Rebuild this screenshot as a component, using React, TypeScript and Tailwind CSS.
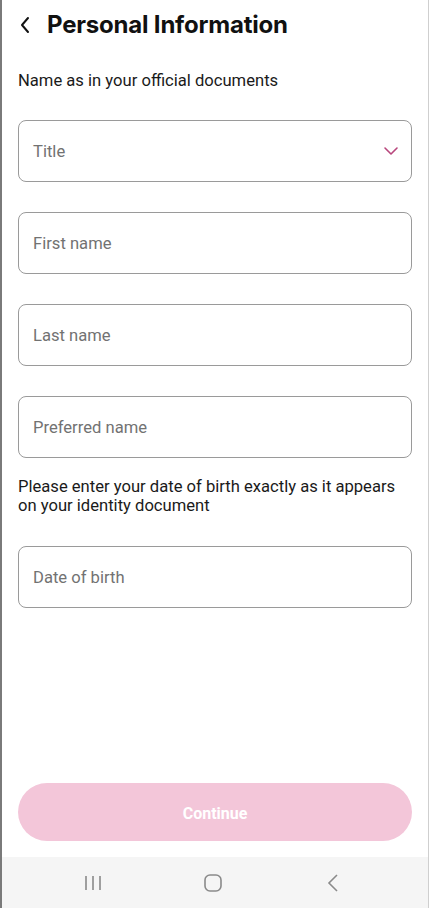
import React from "react";

function Field({ label, chevron }: { label: string; chevron?: boolean }) {
  return (
    <div className="flex h-[62px] items-center justify-between rounded-[8px] border border-[#9a9a9a] bg-white pl-[14px] pr-[12px]">
      <span className="pt-[2px] text-[16.6px] text-[#727272]">{label}</span>
      {chevron && (
        <svg width="16" height="10" viewBox="0 0 16 10" fill="none">
          <path d="M2 2l6 6 6-6" stroke="#b8467c" strokeWidth="1.6" strokeLinecap="round" strokeLinejoin="round" />
        </svg>
      )}
    </div>
  );
}

export default function App() {
  return (
    <div
      className="flex h-[908px] w-[429px] flex-col border-l-2 border-r border-l-[#7a7a7a] border-r-[#cfcfcf] bg-white"
      style={{ fontFamily: "Roboto, 'Liberation Sans', sans-serif" }}
    >
      <div className="flex h-[49px] items-center pl-[17px]">
        <svg width="12" height="18" viewBox="0 0 12 18" fill="none">
          <path d="M9 2L3 9l6 7" stroke="#111" strokeWidth="2" strokeLinecap="round" strokeLinejoin="round" />
        </svg>
        <h1
          className="ml-[16px] text-[24px] font-bold tracking-[-0.2px] text-[#111]"
          style={{ fontFamily: "Inter, 'Liberation Sans', sans-serif" }}
        >
          Personal Information
        </h1>
      </div>

      <div className="flex flex-1 flex-col px-[16px]">
        <p className="mt-[22px] text-[16.6px] leading-[20px] text-[#1a1a1a]">Name as in your official documents</p>
        <div className="mt-[29px] flex flex-col gap-[30px]">
          <Field label="Title" chevron />
          <Field label="First name" />
          <Field label="Last name" />
          <Field label="Preferred name" />
        </div>
        <p className="mt-[19px] text-[16.6px] leading-[19px] text-[#1a1a1a]">
          Please enter your date of birth exactly as it appears on your identity document
        </p>
        <div className="mt-[31px]">
          <Field label="Date of birth" />
        </div>
        <div className="flex-1" />
        <button className="mb-[16px] flex h-[58px] w-full items-center justify-center rounded-full bg-[#f3c6d9] pt-[3px] text-[16px] font-bold text-white">
          Continue
        </button>
      </div>

      <div className="flex h-[51px] items-center justify-center bg-[#f5f5f5] pr-[4px]">
        <div className="flex w-[120px] justify-center">
          <svg width="18" height="16" viewBox="0 0 18 16" fill="none">
            <path d="M2 1v14M9 1v14M16 1v14" stroke="#8a8a8a" strokeWidth="1.6" />
          </svg>
        </div>
        <div className="flex w-[120px] justify-center">
          <svg width="18" height="18" viewBox="0 0 18 18" fill="none">
            <rect x="1" y="1" width="16" height="16" rx="5" stroke="#8a8a8a" strokeWidth="1.6" />
          </svg>
        </div>
        <div className="flex w-[120px] justify-center">
          <svg width="12" height="18" viewBox="0 0 12 18" fill="none">
            <path d="M10 1L2 9l8 8" stroke="#8a8a8a" strokeWidth="1.6" />
          </svg>
        </div>
      </div>
    </div>
  );
}
